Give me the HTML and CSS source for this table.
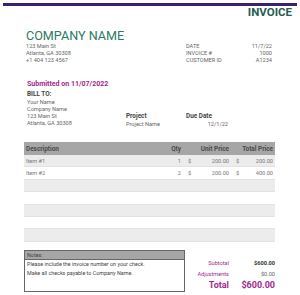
FILE: index.html
```html
<!DOCTYPE html>
<html>
<head>
<meta charset="utf-8">
<link rel="stylesheet" href="styles.css">
</head>
<body>
<div class="page">
  <div class="topbar"></div>
  <div class="title">INVOICE</div>
  <div class="head">
    <div class="company">
      <div class="cname">COMPANY NAME</div>
      <div class="small">123 Main St</div>
      <div class="small">Atlanta, GA 30308</div>
      <div class="small">+1 404 123 4567</div>
    </div>
    <div class="meta">
      <div class="mrow"><span>DATE</span><span>11/7/22</span></div>
      <div class="mrow"><span>INVOICE #</span><span>1000</span></div>
      <div class="mrow"><span>CUSTOMER ID</span><span>A1234</span></div>
    </div>
  </div>
  <div class="submitted">Submitted on 11/07/2022</div>
  <div class="billrow">
    <div class="bill">
      <div class="label">BILL TO:</div>
      <div class="small">Your Name</div>
      <div class="small">Company Name</div>
      <div class="small">123 Main St</div>
      <div class="small">Atlanta, GA 30308</div>
    </div>
    <div class="project">
      <div class="label">Project</div>
      <div class="small">Project Name</div>
    </div>
    <div class="due">
      <div class="label">Due Date</div>
      <div class="small dueval">12/1/22</div>
    </div>
  </div>
  <div class="table">
    <div class="tr th">
      <div class="c-desc">Description</div>
      <div class="c-qty">Qty</div>
      <div class="c-unit">Unit Price</div>
      <div class="c-total">Total Price</div>
    </div>
    <div class="tr alt">
      <div class="c-desc">Item #1</div>
      <div class="c-qty">1</div>
      <div class="c-unit"><span>$</span><span>200.00</span></div>
      <div class="c-total"><span>$</span><span>200.00</span></div>
    </div>
    <div class="tr">
      <div class="c-desc">Item #2</div>
      <div class="c-qty">2</div>
      <div class="c-unit"><span>$</span><span>200.00</span></div>
      <div class="c-total"><span>$</span><span>400.00</span></div>
    </div>
    <div class="tr alt"></div>
    <div class="tr"></div>
    <div class="tr alt"></div>
    <div class="tr"></div>
    <div class="tr alt"></div>
  </div>
  <div class="bottom">
    <div class="notes">
      <div class="nhead">Notes:</div>
      <div class="nline">Please include the invoice number on your check.</div>
      <div class="nline">Make all checks  payable to Company Name.</div>
    </div>
    <div class="totals">
      <div class="trow"><span class="tl">Subtotal</span><span class="tv">$600.00</span></div>
      <div class="trow"><span class="tl">Adjustments</span><span class="tv light">$0.00</span></div>
      <div class="trow big"><span class="tl">Total</span><span class="tv">$600.00</span></div>
    </div>
  </div>
</div>
</body>
</html>
```
FILE: styles.css
```css
* { box-sizing: border-box; }
html, body { margin: 0; padding: 0; background: #fff; }
body {
  width: 300px;
  height: 295px;
  overflow: hidden;
  font-family: Roboto, "Liberation Sans", sans-serif;
  color: #666;
}
.page { position: relative; width: 300px; }
.topbar {
  margin: 3px 3px 0 3px;
  height: 3px;
  background: #3a2270;
}
.title {
  text-align: right;
  padding-right: 8px;
  font-size: 11.5px;
  font-weight: bold;
  color: #1f5e50;
  line-height: 12px;
}
.head {
  display: flex;
  justify-content: space-between;
  margin-top: 11px;
  padding-left: 26px;
  padding-right: 28px;
}
.cname {
  font-size: 12.6px;
  color: #2a7a64;
  line-height: 13px;
  margin-bottom: 1px;
}
.small {
  font-size: 5.6px;
  line-height: 7px;
  color: #666;
}
.meta {
  width: 86px;
  margin-top: 14px;
  font-size: 5.6px;
  color: #666;
}
.mrow {
  display: flex;
  justify-content: space-between;
  line-height: 7px;
}
.submitted {
  margin-top: 16px;
  padding-left: 27px;
  font-size: 7px;
  font-weight: bold;
  color: #a1298e;
  line-height: 9px;
}
.billrow {
  display: flex;
  padding-left: 27px;
  margin-top: 1px;
}
.label {
  font-size: 6.4px;
  font-weight: bold;
  color: #444;
  line-height: 9px;
}
.bill { width: 99px; }
.project { width: 60px; padding-top: 22px; }
.due { width: 42px; padding-top: 22px; }
.dueval { text-align: right; }
.table {
  margin: 14px 0 0 24px;
  width: 251px;
}
.tr {
  display: grid;
  grid-template-columns: 1fr 24px 48px 44px;
  height: 12.4px;
  align-items: center;
  font-size: 5.6px;
  color: #777;
  border-bottom: 1px solid #e2e2e2;
  background: #fff;
}
.tr.alt { background: #ececec; }
.tr.th {
  height: 13px;
  background: #a6a6a6;
  font-size: 6.4px;
  font-weight: bold;
  color: #4a4a4a;
  border-bottom: none;
}
.tr > div { padding: 0 2px; }
.c-desc { padding-left: 2px; }
.c-qty { text-align: right; }
.c-unit, .c-total { display: flex; justify-content: space-between; }
.th .c-unit, .th .c-total { justify-content: flex-end; }
.c-unit span:first-child, .c-total span:first-child { padding-left: 3px; }
.bottom {
  display: flex;
  margin: 8px 0 0 24px;
  width: 251px;
}
.notes {
  width: 161px;
  height: 42px;
  border: 1px solid #666;
  font-size: 5.4px;
  color: #444;
}
.nhead {
  background: #a6a6a6;
  line-height: 8px;
  padding-left: 2px;
  border-bottom: 1px solid #666;
}
.nline {
  line-height: 9px;
  padding-left: 2px;
}
.totals {
  flex: 1;
  padding-top: 8px;
}
.trow {
  display: grid;
  grid-template-columns: 44px 1fr;
  font-size: 5.6px;
  line-height: 11px;
}
.tl { text-align: right; color: #a1298e; }
.tv { text-align: right; font-weight: bold; color: #333; }
.tv.light { font-weight: normal; color: #666; }
.trow.big { font-size: 9px; line-height: 10px; }
.trow.big .tl, .trow.big .tv { font-weight: bold; color: #a1298e; }
```
